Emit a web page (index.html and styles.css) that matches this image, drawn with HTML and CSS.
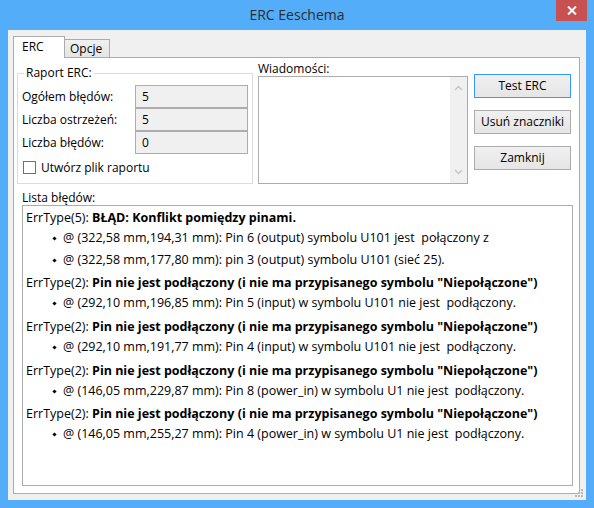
FILE: index.html
```html
<!DOCTYPE html>
<html lang="pl">
<head>
<meta charset="utf-8">
<title>ERC Eeschema</title>
<link rel="stylesheet" href="styles.css">
</head>
<body>
<div class="window">
  <div class="titlebar">
    <span class="title">ERC Eeschema</span>
    <div class="close"><svg width="10" height="9" viewBox="0 0 10 9"><path d="M1 0.5 L9 8.5 M9 0.5 L1 8.5" stroke="#fff" stroke-width="2" fill="none"/></svg></div>
  </div>
  <div class="client">
    <div class="tabs">
      <div class="tab active">ERC</div>
      <div class="tab">Opcje</div>
    </div>
    <div class="page">
      <div class="toprow">
        <fieldset class="report">
          <legend>Raport ERC:</legend>
          <div class="stats">
            <div class="stat"><span class="lbl">Ogółem błędów:</span><span class="val">5</span></div>
            <div class="stat"><span class="lbl">Liczba ostrzeżeń:</span><span class="val">5</span></div>
            <div class="stat"><span class="lbl">Liczba błędów:</span><span class="val">0</span></div>
          </div>
          <div class="chk"><span class="box"></span><span>Utwórz plik raportu</span></div>
        </fieldset>
        <div class="msgs">
          <div class="cap">Wiadomości:</div>
          <div class="msgbox">
            <div class="vscroll">
              <svg width="9" height="6" viewBox="0 0 9 6"><path d="M1 5 L4.5 1.5 L8 5" stroke="#c2c2c2" stroke-width="1.3" fill="none"/></svg>
              <svg width="9" height="6" viewBox="0 0 9 6"><path d="M1 1 L4.5 4.5 L8 1" stroke="#c2c2c2" stroke-width="1.3" fill="none"/></svg>
            </div>
          </div>
        </div>
        <div class="buttons">
          <div class="btn default">Test ERC</div>
          <div class="btn">Usuń znaczniki</div>
          <div class="btn">Zamknij</div>
        </div>
      </div>
      <div class="cap list-cap">Lista błędów:</div>
      <div class="errlist">
        <div class="hdr">ErrType(5): <b>BŁĄD: Konflikt pomiędzy pinami.</b></div>
        <div class="item">@ (322,58 mm,194,31 mm): Pin 6 (output) symbolu U101 jest  połączony z</div>
        <div class="item">@ (322,58 mm,177,80 mm): pin 3 (output) symbolu U101 (sieć 25).</div>
        <div class="hdr">ErrType(2): <b>Pin nie jest podłączony (i nie ma przypisanego symbolu "Niepołączone")</b></div>
        <div class="item">@ (292,10 mm,196,85 mm): Pin 5 (input) w symbolu U101 nie jest  podłączony.</div>
        <div class="hdr">ErrType(2): <b>Pin nie jest podłączony (i nie ma przypisanego symbolu "Niepołączone")</b></div>
        <div class="item">@ (292,10 mm,191,77 mm): Pin 4 (input) w symbolu U101 nie jest  podłączony.</div>
        <div class="hdr">ErrType(2): <b>Pin nie jest podłączony (i nie ma przypisanego symbolu "Niepołączone")</b></div>
        <div class="item">@ (146,05 mm,229,87 mm): Pin 8 (power_in) w symbolu U1 nie jest  podłączony.</div>
        <div class="hdr">ErrType(2): <b>Pin nie jest podłączony (i nie ma przypisanego symbolu "Niepołączone")</b></div>
        <div class="item">@ (146,05 mm,255,27 mm): Pin 4 (power_in) w symbolu U1 nie jest  podłączony.</div>
      </div>
    </div>
  </div>
  <svg class="grip" width="9" height="9" viewBox="0 0 9 9"><g fill="#b9b9b9"><rect x="6" y="0" width="2" height="2"/><rect x="3" y="3" width="2" height="2"/><rect x="6" y="3" width="2" height="2"/><rect x="0" y="6" width="2" height="2"/><rect x="3" y="6" width="2" height="2"/><rect x="6" y="6" width="2" height="2"/></g></svg>
</div>
</body>
</html>
```
FILE: styles.css
```css
* { box-sizing: border-box; }
html, body { margin: 0; padding: 0; }
body {
  width: 594px;
  height: 508px;
  overflow: hidden;
  font-family: "Open Sans", "Noto Sans", sans-serif;
  font-size: 12px;
  color: #000;
}
.window {
  position: relative;
  width: 594px;
  height: 508px;
  background: #53adf9;
  padding: 0 8px 8px 8px;
  display: flex;
  flex-direction: column;
}
.titlebar {
  height: 30px;
  display: flex;
  align-items: center;
  justify-content: center;
  padding-bottom: 1px;
}
.title {
  font-size: 14px;
  color: #2b2b2b;
}
.close {
  position: absolute;
  top: 0;
  right: 7px;
  width: 31px;
  height: 21px;
  background: #c75050;
  display: flex;
  align-items: center;
  justify-content: center;
}
.client {
  flex: 1;
  background: #f0f0f0;
  padding: 6px 6px 6px 5px;
  display: flex;
  flex-direction: column;
}
.tabs {
  display: flex;
  align-items: flex-end;
  height: 21px;
  position: relative;
  z-index: 1;
}
.tab {
  height: 18px;
  width: 46px;
  margin-left: -1px;
  border: 1px solid #acacac;
  border-bottom: none;
  background: linear-gradient(#f0f0f0, #e5e5e5);
  padding-left: 5px;
  line-height: 17px;
}
.tab.active {
  margin-left: 0;
  width: 52px;
  height: 22px;
  margin-bottom: -1px;
  background: #fff;
  padding-left: 8px;
  line-height: 19px;
}
.page {
  flex: 1;
  border: 1px solid #acacac;
  background: #fff;
  padding: 3px 7px 7px 3px;
  display: flex;
  flex-direction: column;
}
.toprow {
  display: flex;
  align-items: flex-start;
}
.report {
  margin: 4px 0 0 0;
  width: 236px;
  border: 1px solid #dcdcdc;
  padding: 0 4px 9px 4px;
  min-width: 0;
}
.report legend {
  padding: 0 2px;
  margin-left: 2px;
  line-height: 16px;
}
.stats {
  margin-top: 4px;
}
.stat {
  display: flex;
  align-items: center;
  justify-content: space-between;
  height: 23px;
}
.val {
  width: 113px;
  height: 23px;
  border: 1px solid #acacac;
  background: #f0f0f0;
  padding-left: 6px;
  line-height: 21px;
}
.chk {
  margin-top: 7px;
  display: flex;
  align-items: center;
  height: 13px;
  margin-left: 1px;
}
.box {
  width: 13px;
  height: 13px;
  border: 1px solid #707070;
  background: #fff;
  margin-right: 5px;
}
.msgs {
  margin-left: 5px;
  width: 210px;
}
.cap {
  line-height: 15px;
  height: 15px;
}
.msgbox {
  height: 108px;
  border: 1px solid #acacac;
  background: #fff;
  display: flex;
  justify-content: flex-end;
}
.vscroll {
  width: 17px;
  background: #f0f0f0;
  display: flex;
  flex-direction: column;
  justify-content: space-between;
  align-items: center;
  padding: 8px 0 8px 0;
}
.buttons {
  margin-left: 6px;
  margin-top: 13px;
  width: 97px;
  display: flex;
  flex-direction: column;
  gap: 12px;
}
.btn {
  height: 24px;
  border: 1px solid #acacac;
  background: linear-gradient(#f0f0f0, #e5e5e5);
  text-align: center;
  line-height: 22px;
}
.btn.default {
  border-color: #3399ff;
}
.list-cap {
  margin-top: 6px;
  margin-left: 5px;
}
.errlist {
  flex: 1;
  margin-left: 5px;
  margin-right: -1px;
  border: 1px solid #acacac;
  background: #fff;
  padding: 1px 0 0 3px;
  font-size: 12.5px;
}
.hdr {
  line-height: 22px;
  height: 22px;
  white-space: pre;
}
.hdr b { font-weight: 700; }
.item {
  position: relative;
  line-height: 18px;
  height: 18px;
  margin-bottom: 3.7px;
  padding-left: 37px;
  white-space: pre;
}
.item::before {
  content: "";
  position: absolute;
  left: 27px;
  top: 8px;
  width: 3px;
  height: 3px;
  background: #000;
  transform: rotate(45deg);
}
.grip {
  position: absolute;
  left: 575px;
  top: 489px;
}
```
